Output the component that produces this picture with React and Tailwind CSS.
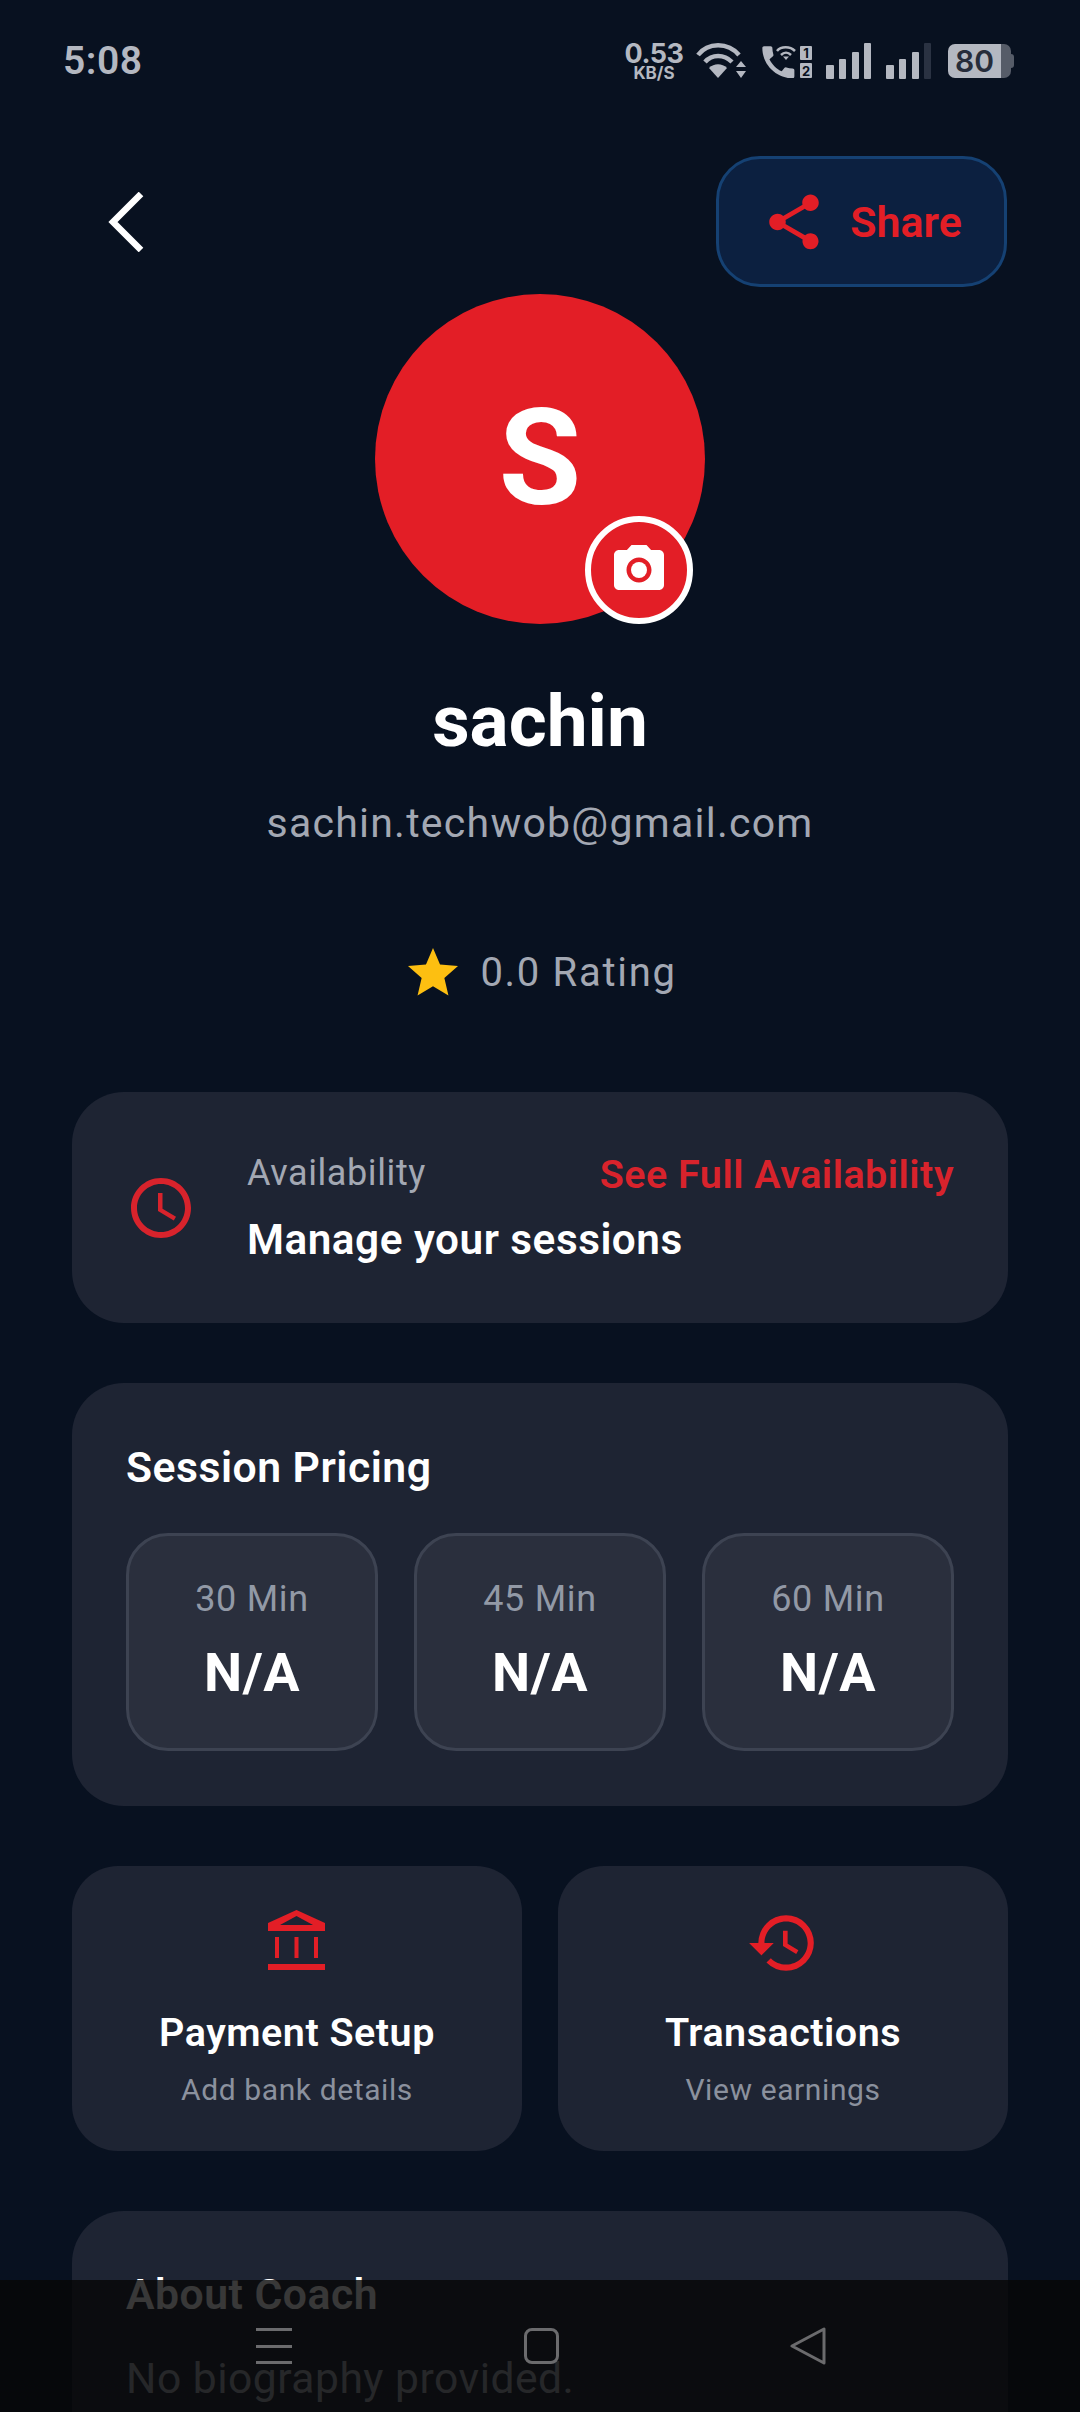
import React from "react";
import { MdShare, MdPhotoCamera, MdAccessTime, MdHistory, MdStar } from "react-icons/md";

const PriceBox = ({ label }) => (
  <div className="flex-1 h-[218px] rounded-[42px] border-[3px] border-[#3d4352] bg-[#2a2f3d] flex flex-col items-center">
    <span className="mt-[42px] text-[36px] leading-[42px] tracking-[0.7px] text-[#9299a6]">{label}</span>
    <span className="mt-[22px] text-[54px] leading-[62px] font-bold tracking-[0.5px] text-white">N/A</span>
  </div>
);

const BankIcon = () => (
  <svg width="57" height="60" viewBox="0 0 57 60" className="mb-[6px] mr-[2px] text-[#e31e26]" fill="currentColor">
    <path fillRule="evenodd" d="M28.5 0 L57 13 V21 H0 V13 Z M28.5 6 L12 15 H45 Z" />
    <rect x="7" y="27" width="4" height="21" />
    <rect x="26.5" y="27" width="4" height="21" />
    <rect x="46" y="27" width="4" height="21" />
    <rect x="0" y="54" width="57" height="6" />
  </svg>
);

const ActionCard = ({ icon, title, sub }) => (
  <div className="flex-1 h-[285px] rounded-[46px] bg-[#1e2433] flex flex-col items-center">
    <div className="mt-[44px] h-[66px] flex items-center justify-center">{icon}</div>
    <span className="mt-[34px] text-[39.5px] leading-[46px] font-semibold tracking-[0.5px] text-white">{title}</span>
    <span className="mt-[16px] text-[30px] leading-[36px] tracking-[0.6px] text-[#8b919e]">{sub}</span>
  </div>
);

const StatusIcons = () => (
  <div className="flex items-center text-[#b4b8c1] font-['Inter',sans-serif]">
    <div className="flex flex-col items-center w-[60px] font-bold">
      <span className="text-[27px] leading-[24px] tracking-[-0.5px]">0.53</span>
      <span className="text-[17px] leading-[15px]">KB/S</span>
    </div>
    <svg width="50" height="36" viewBox="0 0 50 36" className="ml-[12px]" fill="none" stroke="currentColor" strokeWidth="4.5">
      <path d="M2 12 C12 -1 32 -1 43 12" />
      <path d="M9 19 C16 11 28 11 36 19" />
      <path d="M22 35 L13 25 C18 20 26 20 31 25 Z" fill="currentColor" stroke="none" />
      <path d="M45 18 L50 24 H40 Z M45 35 L40 28 H50 Z" fill="currentColor" stroke="none" />
    </svg>
    <svg width="50" height="34" viewBox="0 0 50 34" className="ml-[16px]" fill="currentColor">
      <g transform="translate(-5,-3) scale(1.78)">
        <path d="M20.01 15.38c-1.23 0-2.42-.2-3.53-.56-.35-.12-.74-.03-1.01.24l-1.57 1.97c-2.83-1.35-5.48-3.9-6.89-6.83l1.95-1.66c.27-.28.35-.67.24-1.02-.37-1.11-.56-2.3-.56-3.53 0-.54-.45-.99-.99-.99H4.19C3.65 3 3 3.24 3 3.99 3 13.28 10.73 21 20.01 21c.71 0 .99-.63.99-1.18v-3.45c0-.54-.45-.99-.99-.99z" />
      </g>
      <path d="M15 7 C19 2 28 2 33 7 M19 11 C22 8 26 8 29 11" fill="none" stroke="currentColor" strokeWidth="2.5" />
      <path d="M24 16 L21 12.5 H27 Z" />
      <rect x="38" y="2" width="12" height="14" rx="1" />
      <rect x="38" y="19" width="12" height="15" rx="1" />
      <text x="44" y="14" textAnchor="middle" fontSize="13" fontWeight="700" fill="#081120">1</text>
      <text x="44" y="31.5" textAnchor="middle" fontSize="13" fontWeight="700" fill="#081120">2</text>
    </svg>
    <svg width="105" height="36" viewBox="0 0 105 36" className="ml-[14px]" fill="currentColor">
      <rect x="0" y="22" width="8" height="14" rx="1" />
      <rect x="13" y="16" width="7" height="20" rx="1" />
      <rect x="26" y="9" width="7" height="27" rx="1" />
      <rect x="38" y="0" width="7" height="36" rx="1" />
      <rect x="60" y="22" width="8" height="14" rx="1" />
      <rect x="73" y="16" width="7" height="20" rx="1" />
      <rect x="86" y="9" width="7" height="27" rx="1" />
      <rect x="98" y="0" width="7" height="36" rx="1" fill="#2a3242" />
    </svg>
    <div className="ml-[17px] flex items-center">
      <div className="flex w-[63px] h-[34px] rounded-[7px] overflow-hidden">
        <div className="w-[53px] bg-[#b4b8c1] text-[#262c3a] text-[30px] leading-[34px] font-semibold text-center">80</div>
        <div className="flex-1 bg-[#565c68]" />
      </div>
      <div className="w-[3px] h-[14px] bg-[#565c68] rounded-r-[3px]" />
    </div>
  </div>
);

export default function App() {
  return (
    <div className="relative w-[1080px] h-[2412px] overflow-hidden bg-[#081120] font-['Roboto',sans-serif]">
      {/* Status bar */}
      <div className="flex items-center justify-between pl-[63px] pr-[66px] pt-[42px] h-[80px]">
        <span className="text-[39px] leading-[40px] font-semibold tracking-[0.5px] text-[#b4b8c1]">5:08</span>
        <StatusIcons />
      </div>

      {/* Header */}
      <div className="mt-[76px] ml-[72px] mr-[73px] flex items-center justify-between">
        <svg width="36" height="60" viewBox="0 0 36 60" className="ml-[36px]" fill="none" stroke="white" strokeWidth="6.5">
          <path d="M33 2 L5 30 L33 58" />
        </svg>
        <div className="w-[291px] h-[131px] rounded-[44px] border-[3px] border-[#154173] bg-[#0c2040] flex items-center justify-center gap-[23px]">
          <MdShare className="text-[#e31e26] text-[66px]" />
          <span className="text-[#e31e26] text-[43px] font-semibold leading-[50px]">Share</span>
        </div>
      </div>

      {/* Profile */}
      <div className="flex flex-col items-center mt-[7px]">
        <div className="relative w-[330px] h-[330px] rounded-full bg-[#e31e26] flex items-center justify-center">
          <span className="text-[134px] leading-none font-bold text-white">S</span>
          <div className="absolute right-[12px] bottom-0 w-[108px] h-[108px] rounded-full border-[6px] border-white bg-[#e31e26] flex items-center justify-center">
            <MdPhotoCamera className="text-white text-[60px]" />
          </div>
        </div>
        <span className="mt-[57px] text-[73px] leading-[80px] font-bold text-white">sachin</span>
        <span className="mt-[37px] text-[41px] leading-[50px] tracking-[1.25px] text-[#a3a8b3]">sachin.techwob@gmail.com</span>
        <div className="mt-[95px] flex items-center gap-[17px]">
          <MdStar className="text-[#fdbf11] text-[60px]" />
          <span className="text-[40px] leading-[50px] tracking-[1.7px] text-[#a3a8b3]">0.0 Rating</span>
        </div>
      </div>

      <div className="mx-[72px] mt-[89px] flex flex-col gap-[60px]">
        {/* Availability */}
        <div className="h-[231px] rounded-[52px] bg-[#1e2433] flex items-center pl-[53px] pr-[54px]">
          <MdAccessTime className="text-[#d8232c] text-[72px]" />
          <div className="ml-[50px] flex-1">
            <div className="flex items-start justify-between">
              <span className="text-[36px] leading-[44px] tracking-[0.6px] text-[#a3a8b3]">Availability</span>
              <span className="text-[39.5px] leading-[47px] font-semibold tracking-[0.5px] text-[#d8232c]">See Full Availability</span>
            </div>
            <div className="mt-[18px] text-[42.3px] leading-[48px] font-semibold tracking-[0.5px] text-white">Manage your sessions</div>
          </div>
        </div>

        {/* Pricing */}
        <div className="h-[423px] rounded-[52px] bg-[#1e2433] px-[54px] pt-[59px]">
          <div className="text-[42.7px] leading-[50px] font-semibold tracking-[0.5px] text-white">Session Pricing</div>
          <div className="mt-[41px] flex gap-[36px]">
            <PriceBox label="30 Min" />
            <PriceBox label="45 Min" />
            <PriceBox label="60 Min" />
          </div>
        </div>

        {/* Payment and transactions */}
        <div className="flex gap-[36px]">
          <ActionCard icon={<BankIcon />} title="Payment Setup" sub="Add bank details" />
          <ActionCard icon={<MdHistory className="text-[#e31e26] text-[74px]" />} title="Transactions" sub="View earnings" />
        </div>

        {/* About */}
        <div className="h-[400px] rounded-[52px] bg-[#1e2433] px-[54px] pt-[58px]">
          <div className="text-[42.7px] leading-[50px] font-semibold tracking-[0.5px] text-white">About Coach</div>
          <div className="mt-[34px] text-[42.6px] leading-[50px] tracking-[0.5px] text-[#a3a8b3]">No biography provided.</div>
        </div>
      </div>

      {/* Navigation bar */}
      <div className="absolute left-0 right-0 bottom-0 h-[132px] bg-[#060606]/80">
        <div className="absolute left-[256px] top-[48px] w-[36px] h-[36px] flex flex-col justify-between">
          <div className="h-[3px] bg-[#6b6b6d]" />
          <div className="h-[3px] bg-[#6b6b6d]" />
          <div className="h-[3px] bg-[#6b6b6d]" />
        </div>
        <div className="absolute left-[524px] top-[48px] w-[35px] h-[36px] rounded-[8px] border-[3px] border-[#6b6b6d]" />
        <svg width="38" height="38" viewBox="0 0 38 38" className="absolute left-[789px] top-[47px]" fill="none" stroke="#6b6b6d" strokeWidth="3" strokeLinejoin="round">
          <path d="M35 2 V36 L3 19 Z" />
        </svg>
      </div>
    </div>
  );
}
